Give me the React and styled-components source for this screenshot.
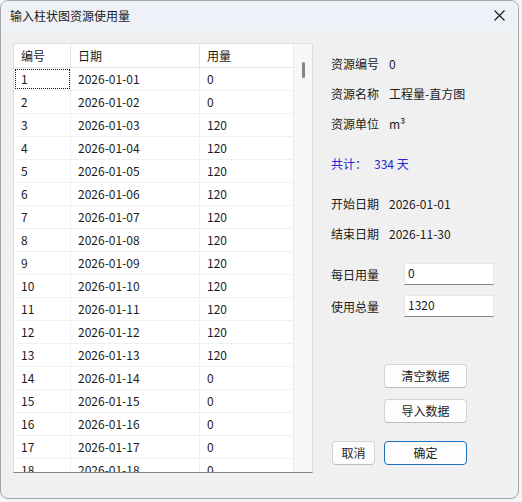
import React from 'react'
import styled, { createGlobalStyle } from 'styled-components'

const GlobalStyle = createGlobalStyle`
    html, body {
        margin: 0;
        padding: 0;
        background: #f4f4f4;
    }
    body {
        font-family: "Noto Sans CJK SC", "Liberation Sans", sans-serif;
        font-size: 12px;
        color: #1b1b1b;
    }
`

const Window = styled.div`
    width: 519px;
    height: 499px;
    box-sizing: border-box;
    border: 1px solid #a6a6a6;
    border-radius: 8px;
    overflow: hidden;
    display: flex;
    flex-direction: column;
    background: #f0f0f0;
`

const TitleBar = styled.div`
    height: 29px;
    flex: none;
    display: flex;
    align-items: center;
    justify-content: space-between;
    padding: 0 9px 0 9px;
    background: #eef2f8;
`

const Title = styled.span`
    font-size: 12px;
    line-height: 12px;
    color: #1a1a1a;
`

const CloseIcon = styled.svg`
    width: 11px;
    height: 11px;
    margin-right: 4px;
`

const Body = styled.div`
    flex: 1;
    display: flex;
    padding: 13px 0 0 12px;
    gap: 18px;
`

const ListView = styled.div`
    width: 300px;
    height: 430px;
    box-sizing: border-box;
    border: 1px solid #dedede;
    border-bottom: 1px solid #838383;
    display: flex;
    flex: none;
`

const ListArea = styled.div`
    flex: 1;
    background: #fff;
    overflow: hidden;
`

const Row = styled.div`
    display: grid;
    grid-template-columns: 57px 129px 1fr;
    height: ${p => (p.$header ? '23px' : '22px')};
    border-bottom: 1px solid ${p => (p.$header ? '#e5e5e5' : '#f0f0f0')};
`

const Cell = styled.div`
    display: flex;
    align-items: center;
    padding-left: 7px;
    border-right: 1px solid ${p => (p.$header ? '#e5e5e5' : '#f0f0f0')};
    line-height: 12px;
    outline: ${p => (p.$focused ? '1px dotted #111' : 'none')};
    outline-offset: -2px;

    &:last-child {
        border-right: none;
    }
`

const ScrollTrack = styled.div`
    width: 18px;
    flex: none;
    background: #f7f7f7;
    border-left: 1px solid #ececec;
    display: flex;
    flex-direction: column;
    align-items: center;
    padding-top: 18px;
`

const ScrollThumb = styled.div`
    width: 3px;
    height: 16px;
    border-radius: 2px;
    background: #858585;
`

const Panel = styled.div`
    display: flex;
    flex-direction: column;
    padding-top: 6px;
`

const InfoRow = styled.div`
    height: 30px;
    display: flex;
    align-items: center;
    gap: ${p => (p.$accent ? 7 : 10)}px;
    margin-top: ${p => p.$gap || 0}px;
    color: ${p => (p.$accent ? '#2424d6' : '#1b1b1b')};
    line-height: 12px;
`

const FieldRow = styled.div`
    height: 32px;
    display: flex;
    align-items: center;
    margin-top: ${p => p.$gap || 0}px;
`

const FieldLabel = styled.span`
    width: 73px;
    line-height: 12px;
    padding-top: 2px;
`

const Field = styled.input`
    width: 90px;
    height: 22px;
    box-sizing: border-box;
    border: 1px solid #e6e6e6;
    border-bottom: 1px solid #868686;
    background: #fff;
    padding: 0 0 3px 3px;
    font: inherit;
    font-size: 12px;
    color: #1b1b1b;
    outline: none;
`

const ButtonStack = styled.div`
    display: flex;
    flex-direction: column;
    gap: 11px;
    margin-top: 42px;
    padding-left: 53px;
`

const Footer = styled.div`
    display: flex;
    gap: 9px;
    margin-top: 18px;
    padding-left: 1px;
`

const Button = styled.button`
    width: ${p => p.$width || 83}px;
    height: 24px;
    box-sizing: border-box;
    background: #fdfdfd;
    border: 1px solid ${p => (p.$primary ? '#1f6fbf' : '#d3d3d3')};
    border-bottom-color: ${p => (p.$primary ? '#1f6fbf' : '#bdbdbd')};
    border-radius: 4px;
    font: inherit;
    font-size: 12px;
    line-height: 12px;
    color: #1b1b1b;
    padding: 0;
`

const usage = [0, 0, 120, 120, 120, 120, 120, 120, 120, 120, 120, 120, 120, 0, 0, 0, 0, 0]
const rows = usage.map((v, i) => ({
    id: i + 1,
    date: `2026-01-${String(i + 1).padStart(2, '0')}`,
    value: v,
}))

export default function App() {
    return (
        <>
            <GlobalStyle />
            <Window>
                <TitleBar>
                    <Title>输入柱状图资源使用量</Title>
                    <CloseIcon viewBox="0 0 11 11">
                        <path d="M0.5 0.5 L10.5 10.5 M10.5 0.5 L0.5 10.5" stroke="#1a1a1a" strokeWidth="1.1" />
                    </CloseIcon>
                </TitleBar>
                <Body>
                    <ListView>
                        <ListArea>
                            <Row $header>
                                <Cell $header>编号</Cell>
                                <Cell $header>日期</Cell>
                                <Cell $header>用量</Cell>
                            </Row>
                            {rows.map((r, i) => (
                                <Row key={r.id}>
                                    <Cell $focused={i === 0}>{r.id}</Cell>
                                    <Cell>{r.date}</Cell>
                                    <Cell>{r.value}</Cell>
                                </Row>
                            ))}
                        </ListArea>
                        <ScrollTrack>
                            <ScrollThumb />
                        </ScrollTrack>
                    </ListView>
                    <Panel>
                        <InfoRow><span>资源编号</span><span>0</span></InfoRow>
                        <InfoRow><span>资源名称</span><span>工程量-直方图</span></InfoRow>
                        <InfoRow><span>资源单位</span><span>m³</span></InfoRow>
                        <InfoRow $accent $gap={10}><span>共计：</span><span>334 天</span></InfoRow>
                        <InfoRow $gap={10}><span>开始日期</span><span>2026-01-01</span></InfoRow>
                        <InfoRow><span>结束日期</span><span>2026-11-30</span></InfoRow>
                        <FieldRow $gap={9}>
                            <FieldLabel>每日用量</FieldLabel>
                            <Field defaultValue="0" />
                        </FieldRow>
                        <FieldRow>
                            <FieldLabel>使用总量</FieldLabel>
                            <Field defaultValue="1320" />
                        </FieldRow>
                        <ButtonStack>
                            <Button>清空数据</Button>
                            <Button>导入数据</Button>
                        </ButtonStack>
                        <Footer>
                            <Button $width={43}>取消</Button>
                            <Button $primary>确定</Button>
                        </Footer>
                    </Panel>
                </Body>
            </Window>
        </>
    )
}
